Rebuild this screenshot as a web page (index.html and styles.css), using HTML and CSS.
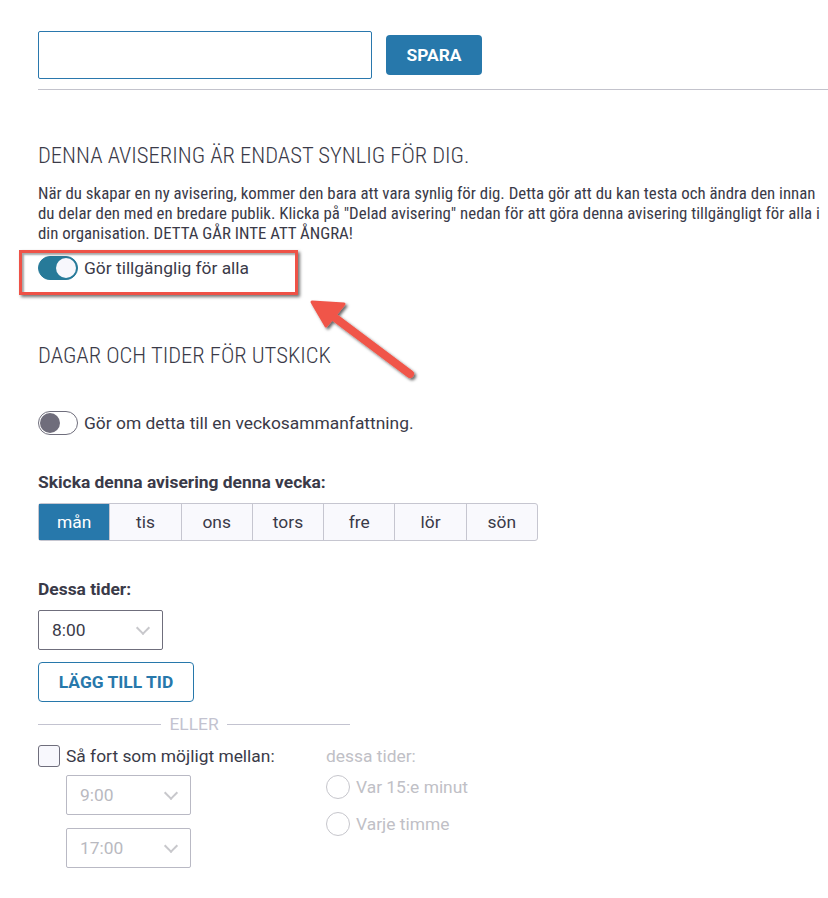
FILE: index.html
```html
<!DOCTYPE html>
<html lang="sv">
<head>
    <meta charset="UTF-8">
    <title>Avisering</title>
    <link rel="stylesheet" href="styles.css">
</head>
<body>
    <div class="page">
        <div class="top-row">
            <input class="name-input" type="text">
            <button class="btn-primary">SPARA</button>
        </div>
        <hr class="divider">

        <!-- Synlighet -->
        <h2 class="section-title first">DENNA AVISERING ÄR ENDAST SYNLIG FÖR DIG.</h2>
        <p class="intro">När du skapar en ny avisering, kommer den bara att vara synlig för dig. Detta gör att du kan testa och ändra den innan du delar den med en bredare publik. Klicka på "Delad avisering" nedan för att göra denna avisering tillgängligt för alla i din organisation. DETTA GÅR INTE ATT ÅNGRA!</p>
        <label class="toggle-row">
            <span class="toggle on"><span class="knob"></span></span>
            Gör tillgänglig för alla
        </label>

        <!-- Dagar och tider -->
        <h2 class="section-title second">DAGAR OCH TIDER FÖR UTSKICK</h2>
        <label class="toggle-row weekly">
            <span class="toggle"><span class="knob"></span></span>
            Gör om detta till en veckosammanfattning.
        </label>

        <div class="field-label days-label">Skicka denna avisering denna vecka:</div>
        <div class="days">
            <span class="day active">mån</span>
            <span class="day">tis</span>
            <span class="day">ons</span>
            <span class="day">tors</span>
            <span class="day">fre</span>
            <span class="day">lör</span>
            <span class="day">sön</span>
        </div>

        <div class="field-label times-label">Dessa tider:</div>
        <div class="select first-time">8:00<span class="chev"></span></div>
        <button class="btn-outline">LÄGG TILL TID</button>

        <div class="or-row"><span class="or-line"></span><span class="or-text">ELLER</span><span class="or-line"></span></div>

        <div class="asap">
            <div class="asap-left">
                <label class="check-row"><span class="checkbox"></span>Så fort som möjligt mellan:</label>
                <div class="select muted from">9:00<span class="chev"></span></div>
                <div class="select muted to">17:00<span class="chev"></span></div>
            </div>
            <div class="asap-right">
                <div class="muted-label">dessa tider:</div>
                <label class="radio-row"><span class="radio"></span>Var 15:e minut</label>
                <label class="radio-row second-radio"><span class="radio"></span>Varje timme</label>
            </div>
        </div>
    </div>

    <!-- Annotation -->
    <div class="highlight-box"></div>
    <svg class="arrow" width="140" height="110" viewBox="0 0 140 110">
        <defs>
            <filter id="sh" x="-20%" y="-20%" width="140%" height="140%">
                <feDropShadow dx="2" dy="2" stdDeviation="1.5" flood-color="#000" flood-opacity="0.6"/>
            </filter>
        </defs>
        <g filter="url(#sh)">
            <line x1="110" y1="82" x2="30" y2="22" stroke="#f05548" stroke-width="8" stroke-linecap="round"/>
            <polygon points="12,10 44,12 26,34" fill="#f05548" stroke="#f05548" stroke-width="3" stroke-linejoin="round"/>
        </g>
    </svg>
</body>
</html>
```

FILE: styles.css
```css
body {
    margin: 0;
    font-family: Roboto, "Noto Sans", sans-serif;
    font-size: 17.4px;
    color: #3a3a48;
    background: #fff;
}

.page {
    position: relative;
    padding: 31px 0 30px 38px;
}

.top-row {
    display: flex;
    align-items: center;
    gap: 14px;
}

.name-input {
    width: 334px;
    height: 48px;
    box-sizing: border-box;
    border: 1px solid #2a78ad;
    border-radius: 2px;
    margin: 0;
}

.btn-primary {
    height: 40px;
    width: 96px;
    border: none;
    border-radius: 4px;
    background: #2778ab;
    color: #fff;
    font-family: Roboto, sans-serif;
    font-weight: bold;
    font-size: 17.4px;
}

.divider {
    border: none;
    border-top: 1px solid #c3c3cc;
    margin: 10px 0 0 0;
}

.section-title {
    font-family: "Roboto Condensed", "Liberation Sans Narrow", Roboto, sans-serif;
    font-weight: 300;
    font-size: 22.6px;
    line-height: 26px;
    color: #3a3a48;
    margin: 0;
}

.section-title.first {
    margin-top: 53px;
}

.section-title.second {
    margin-top: 63px;
}

.intro {
    font-family: "Roboto Condensed", "Liberation Sans Narrow", Roboto, sans-serif;
    font-size: 16.85px;
    line-height: 20px;
    margin: 14px 0 0 0;
    width: 790px;
    color: #3a3a48;
}

.toggle-row {
    display: flex;
    align-items: center;
    gap: 6px;
    margin-top: 13px;
    height: 24px;
}

.toggle-row.weekly {
    margin-top: 42px;
}

.toggle {
    width: 40px;
    height: 24px;
    box-sizing: border-box;
    border-radius: 12px;
    border: 1px solid #6f6e7c;
    background: #fff;
    position: relative;
}

.toggle .knob {
    position: absolute;
    top: 1px;
    left: 1px;
    width: 20px;
    height: 20px;
    border-radius: 50%;
    background: #6f6d7b;
}

.toggle.on {
    background: #277a99;
    border-color: #277a99;
}

.toggle.on .knob {
    left: auto;
    right: 1px;
    background: #f7f7fc;
}

.field-label {
    font-weight: bold;
    line-height: 20px;
    color: #3a3a48;
}

.days-label {
    margin-top: 37px;
}

.days {
    display: flex;
    margin-top: 11px;
    width: 500px;
    height: 38px;
    border: 1px solid #c6c6d0;
    border-radius: 3px;
    box-sizing: border-box;
    background: #f9f9fd;
}

.day {
    flex: 1;
    display: flex;
    align-items: center;
    justify-content: center;
    border-left: 1px solid #c6c6d0;
}

.day:first-child {
    border-left: none;
}

.day.active {
    background: #2778ab;
    color: #fff;
}

.times-label {
    margin-top: 38px;
}

.select {
    position: relative;
    width: 125px;
    height: 40px;
    box-sizing: border-box;
    border: 1px solid #6f6e7c;
    border-radius: 2px;
    padding-left: 13px;
    display: flex;
    align-items: center;
}

.select.first-time {
    margin-top: 11px;
}

.chev {
    position: absolute;
    right: 14px;
    top: 12px;
    width: 8px;
    height: 8px;
    border-right: 2px solid #c8c8cc;
    border-bottom: 2px solid #c8c8cc;
    transform: rotate(45deg);
}

.btn-outline {
    display: block;
    margin-top: 12px;
    width: 156px;
    height: 40px;
    background: #fff;
    border: 1px solid #2778ab;
    border-radius: 4px;
    color: #2778ab;
    font-family: Roboto, sans-serif;
    font-weight: bold;
    font-size: 17.4px;
}

.or-row {
    display: flex;
    align-items: center;
    gap: 8px;
    width: 312px;
    margin-top: 12px;
    height: 20px;
}

.or-line {
    flex: 1;
    border-top: 1px solid #c3c3d0;
}

.or-text {
    color: #c3c3d0;
}

.asap {
    display: flex;
    margin-top: 10px;
}

.asap-left {
    width: 288px;
}

.check-row {
    display: flex;
    align-items: center;
    gap: 6px;
    height: 24px;
}

.checkbox {
    width: 22px;
    height: 22px;
    box-sizing: border-box;
    border: 1px solid #6f6e7c;
    border-radius: 3px;
    background: #f8f8fd;
}

.select.muted {
    margin-left: 28px;
    color: #b9b9c0;
    border-color: #b9b9c4;
}

.select.from {
    margin-top: 7px;
}

.select.to {
    margin-top: 13px;
}

.muted-label {
    color: #c0c0c6;
    height: 24px;
    line-height: 24px;
}

.radio-row {
    display: flex;
    align-items: center;
    gap: 6px;
    color: #c0c0c6;
    height: 24px;
    margin-top: 7px;
}

.radio-row.second-radio {
    margin-top: 13px;
}

.radio {
    width: 24px;
    height: 24px;
    box-sizing: border-box;
    border: 1px solid #c6c6cc;
    border-radius: 50%;
}

/* Annotation overlay */
.highlight-box {
    position: absolute;
    left: 19px;
    top: 250px;
    width: 279px;
    height: 45px;
    box-sizing: border-box;
    border: 3px solid #ee5247;
    box-shadow: 2px 2px 3px rgba(0, 0, 0, 0.55), inset 2px 2px 2px rgba(0, 0, 0, 0.35);
}

.arrow {
    position: absolute;
    left: 300px;
    top: 292px;
}
```
